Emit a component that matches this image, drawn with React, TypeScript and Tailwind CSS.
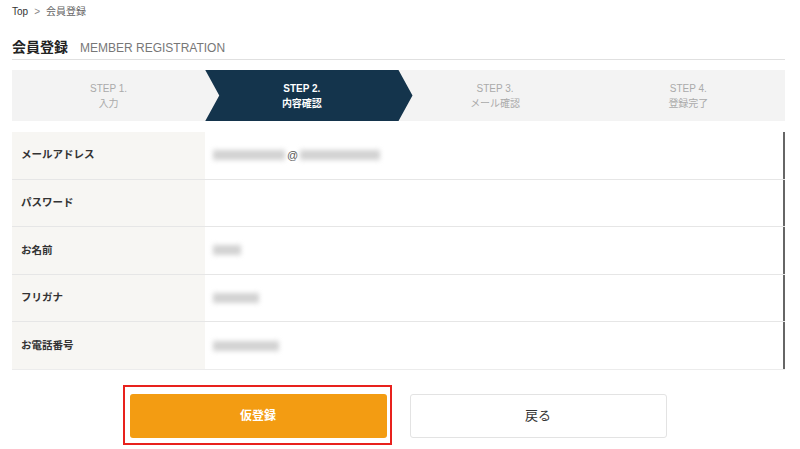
const font = '[font-family:"Liberation_Sans","Noto_Sans_CJK_JP",sans-serif]';

const steps = [
  { no: 'STEP 1.', label: '入力' },
  { no: 'STEP 2.', label: '内容確認' },
  { no: 'STEP 3.', label: 'メール確認' },
  { no: 'STEP 4.', label: '登録完了' },
];

const Blur = ({ w }: { w: number }) => (
  <span className="inline-block h-[10px] bg-[#d2d2d2] blur-[2.5px] align-middle" style={{ width: w }} />
);

const rows: { label: string; value: React.ReactNode }[] = [
  {
    label: 'メールアドレス',
    value: (
      <span className="flex items-center">
        <Blur w={72} />
        <span className="px-[2px] text-[11px] text-[#555]">@</span>
        <Blur w={80} />
      </span>
    ),
  },
  { label: 'パスワード', value: null },
  { label: 'お名前', value: <Blur w={28} /> },
  { label: 'フリガナ', value: <Blur w={46} /> },
  { label: 'お電話番号', value: <Blur w={66} /> },
];

export default function App() {
  return (
    <div className={`${font} min-h-[449px] w-[800px] bg-white text-[#333]`}>
      <div className="ml-3 w-[773px]">
        {/* breadcrumb */}
        <div className="flex h-[23px] items-center gap-[6px] text-[10px]">
          <span className="text-[#333]">Top</span>
          <span className="text-[#888]">&gt;</span>
          <span className="text-[#666]">会員登録</span>
        </div>

        {/* heading */}
        <div className="mt-[15px] flex items-end gap-3 border-b border-[#e0e0e0] pb-[3px]">
          <h1 className="text-[14px] font-bold leading-[18px] text-[#222]">会員登録</h1>
          <span className="text-[12px] leading-[16px] text-[#777]">MEMBER REGISTRATION</span>
        </div>

        {/* steps */}
        <div className="mt-[10px] grid h-[51px] grid-cols-4 bg-[#f3f3f3]">
          {steps.map((s, i) => {
            const active = i === 1;
            return (
              <div key={s.no} className="relative flex flex-col items-center justify-center leading-[15px]">
                {active && (
                  <div className="absolute inset-y-0 left-0 -right-[14px] z-10 bg-[#14344c] [clip-path:polygon(0_0,calc(100%-14px)_0,100%_50%,calc(100%-14px)_100%,0_100%,14px_50%)]" />
                )}
                <span className={`relative z-20 text-[10px] ${active ? 'font-bold text-white' : 'text-[#aaa]'}`}>{s.no}</span>
                <span className={`relative z-20 text-[10px] ${active ? 'font-bold text-white' : 'text-[#aaa]'}`}>{s.label}</span>
              </div>
            );
          })}
        </div>

        {/* confirm table */}
        <div className="mt-[11px]">
          {rows.map((r, i) => (
            <div key={r.label} className={`flex h-[47.6px] ${i < rows.length - 1 ? 'border-b border-[#e6e6e6]' : 'border-b border-[#ececec]'}`}>
              <div className="flex w-[193px] items-center bg-[#f7f6f3] pl-[9px] text-[10.5px] font-bold text-[#333]">
                {r.label}
              </div>
              <div className="flex flex-1 items-center border-r-2 border-[#666] pl-[8px]">{r.value}</div>
            </div>
          ))}
        </div>

        {/* actions */}
        <div className="mt-[15px] flex justify-center gap-[18px] pr-[8px]">
          <div className="border-2 border-[#e8211d] pb-[5px] pl-[5px] pr-[3px] pt-[7px]">
            <button className="h-[44px] w-[257px] rounded-[3px] bg-[#f39c12] text-[12px] font-bold text-white">
              仮登録
            </button>
          </div>
          <button className="mt-[9px] h-[44px] w-[257px] rounded-[3px] border border-[#e3e3e3] bg-white text-[13px] text-[#333]">
            戻る
          </button>
        </div>
      </div>
    </div>
  );
}
